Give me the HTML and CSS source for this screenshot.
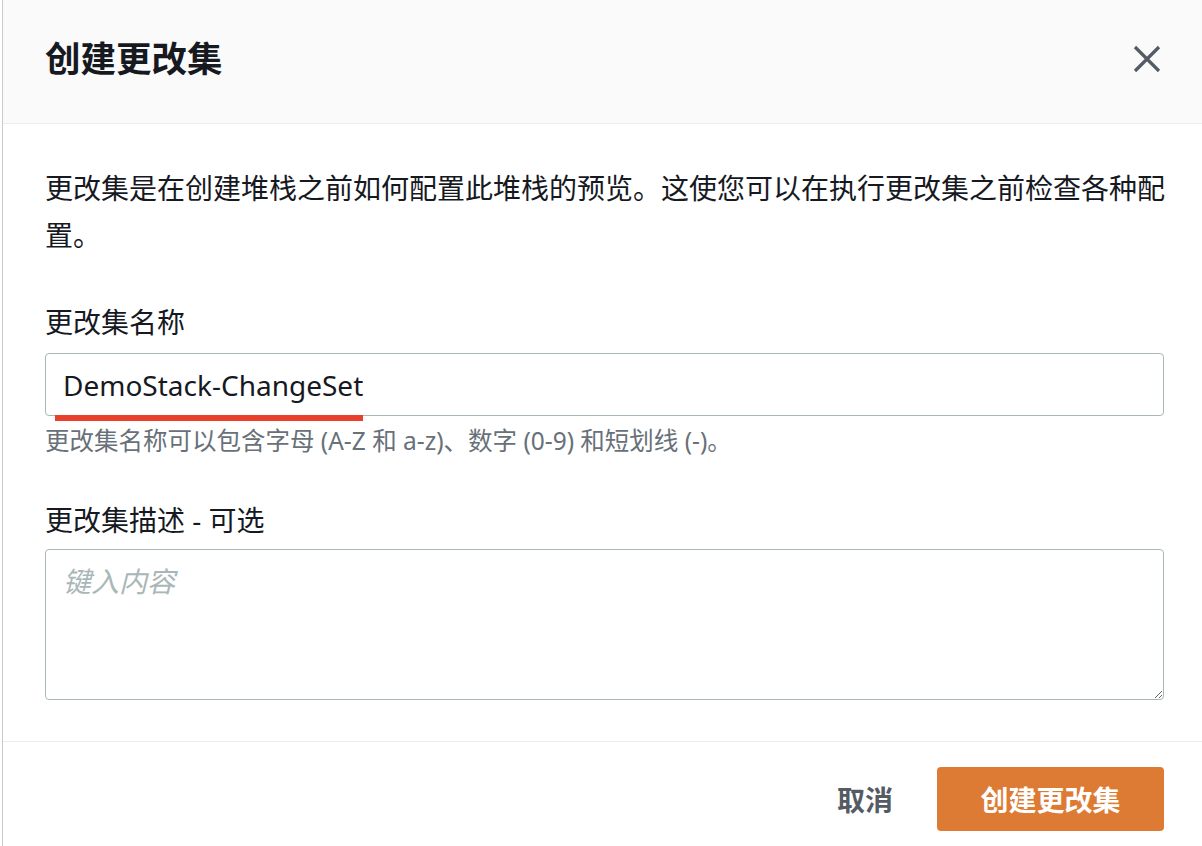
FILE: index.html
```html
<!DOCTYPE html>
<html lang="zh-CN">
<head>
<meta charset="utf-8">
<title>创建更改集</title>
<link rel="stylesheet" href="styles.css">
</head>
<body>
<div class="modal">
  <header class="modal-header">
    <h1 class="modal-title">创建更改集</h1>
    <button class="close-btn" aria-label="关闭">
      <svg width="28" height="28" viewBox="0 0 28 28"><path d="M2 2 L26 26 M26 2 L2 26" stroke="#545b64" stroke-width="3.2" fill="none"/></svg>
    </button>
  </header>
  <div class="modal-body">
    <p class="intro">更改集是在创建堆栈之前如何配置此堆栈的预览。这使您可以在执行更改集之前检查各种配置。</p>
    <div class="field field-name">
      <label class="field-label" for="csname">更改集名称</label>
      <div class="input-wrap">
        <input id="csname" class="text-input" type="text" value="DemoStack-ChangeSet">
        <span class="mark"></span>
      </div>
      <div class="help">更改集名称可以包含字母 (A-Z 和 a-z)、数字 (0-9) 和短划线 (-)。</div>
    </div>
    <div class="field field-desc">
      <label class="field-label" for="csdesc">更改集描述 - 可选</label>
      <textarea id="csdesc" class="text-area" placeholder="键入内容"></textarea>
    </div>
  </div>
  <footer class="modal-footer">
    <button class="btn-link">取消</button>
    <button class="btn-primary">创建更改集</button>
  </footer>
</div>
</body>
</html>
```

FILE: styles.css
```css
* { box-sizing: border-box; }
html, body { margin: 0; padding: 0; background: #ffffff; }
body {
  font-family: "Noto Sans", "Noto Sans CJK SC", sans-serif;
  color: #16191f;
  width: 1202px;
  height: 846px;
  overflow: hidden;
}
.modal {
  margin-left: 2px;
  border-left: 1px solid #c9cccc;
  height: 846px;
  background: #fff;
}
.modal-header {
  height: 124px;
  background: #fafafa;
  border-bottom: 1px solid #eaeded;
  display: flex;
  justify-content: space-between;
  align-items: flex-start;
  padding: 0 41px 0 42px;
}
.modal-title {
  margin: 35px 0 0 0;
  font-family: "Noto Sans CJK SC", sans-serif;
  font-size: 35.5px;
  line-height: 44px;
  font-weight: 700;
  color: #16191f;
}
.close-btn {
  margin-top: 45px;
  width: 28px;
  height: 28px;
  padding: 0;
  border: 0;
  background: transparent;
  display: flex;
}
.modal-body {
  padding: 40px 37px 41px 42px;
  border-bottom: 1px solid #eaeded;
}
.intro {
  margin: 0;
  font-family: "Noto Sans CJK SC", sans-serif;
  font-size: 28px;
  line-height: 47px;
}
.field { display: flex; flex-direction: column; }
.field-name { margin-top: 44px; }
.field-desc { margin-top: 42px; }
.field-label {
  font-family: "Noto Sans", "Noto Sans CJK SC", sans-serif;
  font-size: 28px;
  line-height: 40px;
  margin-bottom: 11px;
}
.field-desc .field-label { margin-bottom: 9px; }
.input-wrap { position: relative; }
.text-input {
  display: block;
  width: 1119px;
  height: 63px;
  border: 1px solid #aab7b8;
  border-radius: 4px;
  padding: 0 17px;
  font-family: "Noto Sans", sans-serif;
  font-size: 28px;
  color: #16191f;
  background: #fff;
  outline: none;
}
.mark {
  position: absolute;
  left: 10px;
  top: 62px;
  width: 308px;
  height: 6px;
  background: #e8402a;
}
.help {
  margin-top: 8px;
  font-family: "Noto Sans", "Noto Sans CJK SC", sans-serif;
  font-size: 24.5px;
  line-height: 34px;
  color: #687078;
}
.text-area {
  display: block;
  width: 1119px;
  height: 151px;
  border: 1px solid #aab7b8;
  border-radius: 4px;
  padding: 11px 17px;
  font-family: "Noto Sans", "Noto Sans CJK SC", sans-serif;
  font-size: 28px;
  line-height: 40px;
  color: #16191f;
  resize: both;
  outline: none;
}
.text-area::placeholder {
  color: #aab7b8;
  font-style: italic;
}
.modal-footer {
  display: flex;
  justify-content: flex-end;
  align-items: center;
  gap: 24px;
  padding: 25px 38px 0 0;
}
.btn-link, .btn-primary {
  font-family: "Noto Sans CJK SC", sans-serif;
  font-size: 28px;
  font-weight: 700;
  border: 0;
  height: 64px;
  cursor: pointer;
}
.btn-link {
  background: transparent;
  color: #545b64;
  padding: 0 20px;
}
.btn-primary {
  width: 227px;
  background: #dd7b35;
  color: #ffffff;
  border-radius: 4px;
}
```
